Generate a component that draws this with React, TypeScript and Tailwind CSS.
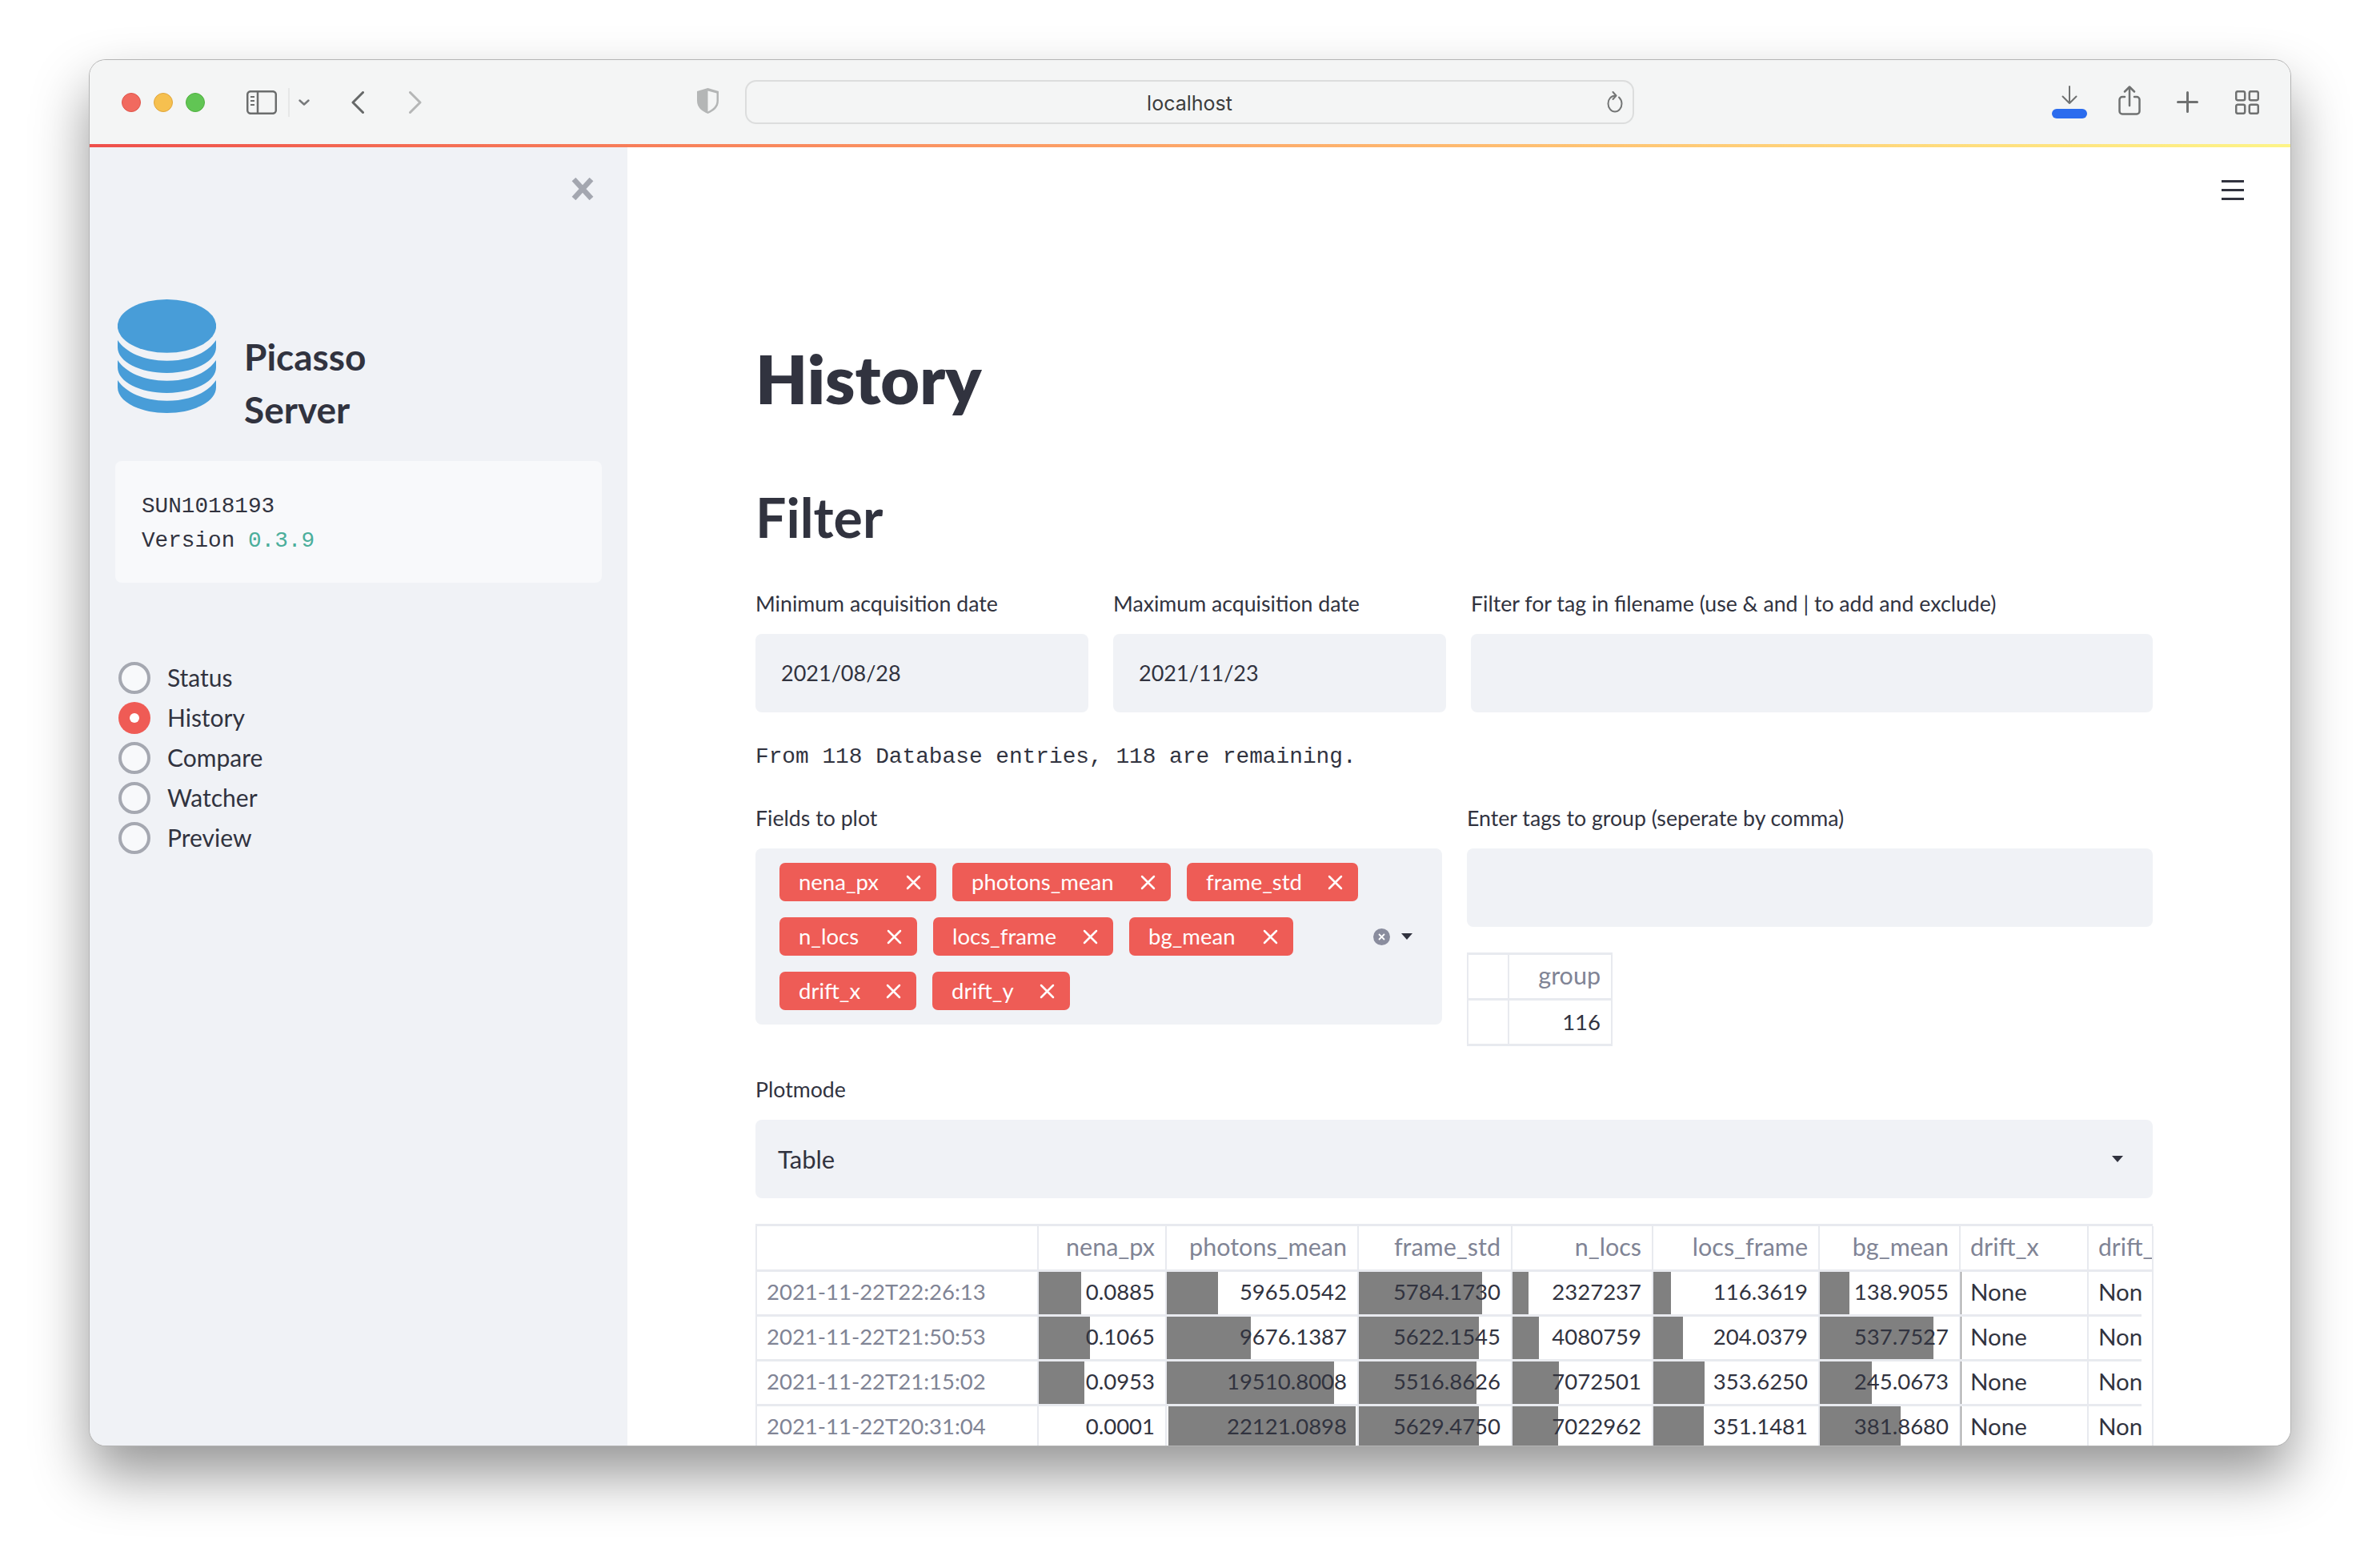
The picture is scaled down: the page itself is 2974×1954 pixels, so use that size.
import React from "react";

const sans = "[font-family:Lato,'Noto_Sans',sans-serif]";

function Toolbar() {
  return (
    <div className="flex h-[105px] shrink-0 items-center bg-[#f4f5f5] pl-[40px] text-[#6b6d6d]">
      <div className="flex gap-[16px]">
        <div className="h-[24px] w-[24px] rounded-full border border-[#e0564c] bg-[#f16a5f]" />
        <div className="h-[24px] w-[24px] rounded-full border border-[#e0a63c] bg-[#f6c04f]" />
        <div className="h-[24px] w-[24px] rounded-full border border-[#4fb03f] bg-[#61c554]" />
      </div>
      <svg className="ml-[52px]" width="38" height="30" viewBox="0 0 38 30" fill="none" stroke="#6b6d6d" strokeWidth="2.5">
        <rect x="1.2" y="1.2" width="35.6" height="27.6" rx="4" />
        <path d="M14 1v28" />
        <path d="M5 8h5M5 13h5M5 18h5" strokeWidth="2" />
      </svg>
      <div className="ml-[14px] h-[36px] w-[2px] bg-[#e6e7e7]" />
      <svg className="ml-[11px]" width="14" height="8" viewBox="0 0 14 8" fill="none" stroke="#77797b" strokeWidth="2.4" strokeLinecap="round" strokeLinejoin="round">
        <path d="M1.5 1.5 7 6.500l5.500-5" />
      </svg>
      <svg className="ml-[52px]" width="16" height="28" viewBox="0 0 16 28" fill="none" stroke="#666868" strokeWidth="3" strokeLinecap="round" strokeLinejoin="round">
        <path d="M14.500 1.500 2 14l12.500 12.500" />
      </svg>
      <svg className="ml-[56px]" width="16" height="28" viewBox="0 0 16 28" fill="none" stroke="#b5b6b6" strokeWidth="3" strokeLinecap="round" strokeLinejoin="round">
        <path d="M1.500 1.500 14 14 1.500 26.500" />
      </svg>
      <svg className="ml-[343px] mt-[-3px]" width="29" height="34" viewBox="0 0 29 34">
        <path d="M14.500 1 28 5v12c0 8-6 13-13.500 16C7 30 1 25 1 17V5Z" fill="#b4b6b6" />
        <path d="M14.500 4.500 25.500 7.500V17c0 6.500-5 10.500-11 13.500Z" fill="#f4f5f5" />
      </svg>
      <div className="relative ml-[32px] flex h-[55px] w-[1111px] items-center justify-center rounded-[14px] border-2 border-[#dcdddd] pt-[5px] text-[25px] text-[#3c3d3d] [font-family:Inter,sans-serif]">
        localhost
        <svg className="absolute right-[12px] top-[12px]" width="20" height="27" viewBox="0 0 20 27" fill="none" stroke="#747676" strokeWidth="2" strokeLinecap="round" strokeLinejoin="round">
          <path d="M11 5.500C5 5.500 1.500 10 1.500 15.500S5.500 25.500 10 25.500 18.500 21 18.500 15.500c0-3.500-1.500-6-3.500-8" />
          <path d="M7.500 1 11.500 5.500 7.500 10" />
        </svg>
      </div>
      <div className="ml-[522px] flex w-[44px] flex-col items-center">
        <svg width="20" height="24" viewBox="0 0 20 24" fill="none" stroke="#6f7171" strokeWidth="2" strokeLinecap="round" strokeLinejoin="round">
          <path d="M10 1v21M1.500 13.500 10 22l8.500-8.500" />
        </svg>
        <div className="mt-[5px] h-[12px] w-[44px] rounded-full bg-[#2b6cee]" />
      </div>
      <svg className="ml-[39px] mt-[-4px]" width="28" height="37" viewBox="0 0 28 37" fill="none" stroke="#6f7171" strokeWidth="2.500" strokeLinecap="round" strokeLinejoin="round">
        <path d="M8 14H5a3.500 3.500 0 0 0-3.500 3.500V32A3.500 3.500 0 0 0 5 35.500h18a3.500 3.500 0 0 0 3.500-3.500V17.500A3.500 3.500 0 0 0 23 14h-3" />
        <path d="M14 25V2M8 7.500 14 1.500l6 6" />
      </svg>
      <svg className="ml-[45px]" width="27" height="27" viewBox="0 0 27 27" fill="none" stroke="#6f7171" strokeWidth="3" strokeLinecap="round">
        <path d="M13.500 1.500v24M1.500 13.500h24" />
      </svg>
      <svg className="ml-[46px]" width="30" height="30" viewBox="0 0 30 30" fill="none" stroke="#6f7171" strokeWidth="2.500">
        <rect x="1.200" y="1.200" width="11" height="11" rx="2" />
        <rect x="17.800" y="1.200" width="11" height="11" rx="2" />
        <rect x="1.200" y="17.800" width="11" height="11" rx="2" />
        <rect x="17.800" y="17.800" width="11" height="11" rx="2" />
      </svg>
    </div>
  );
}

function Logo() {
  const band = "M0 51C10 66 32 76.700 61.500 76.700 91 76.700 113 66 123 51L123 60C123 78 95 92 61.500 92 28 92 0 78 0 60Z";
  return (
    <svg width="123" height="142" viewBox="0 0 123 142" fill="#489dd8">
      <ellipse cx="61.500" cy="33.400" rx="61.700" ry="33.400" />
      <path d={band} />
      <path d={band} transform="translate(0 25)" />
      <path d={band} transform="translate(0 50)" />
    </svg>
  );
}

function Sidebar() {
  const items = ["Status", "History", "Compare", "Watcher", "Preview"];
  return (
    <div className="flex w-[672px] shrink-0 flex-col bg-[#f0f2f6] px-[32px] pt-[38px]">
      <div className="flex justify-end pr-[10px]">
        <svg width="28" height="28" viewBox="0 0 28 28" stroke="#a4a7b0" strokeWidth="6.500">
          <path d="M3 2 25 26M25 2 3 26" />
        </svg>
      </div>
      <div className="ml-[3px] mt-[124px] flex items-start">
        <Logo />
        <div className="ml-[35px] mt-[39px] text-[46px] font-bold leading-[66px] text-[#31333f]">
          <div>Picasso</div>
          <div>Server</div>
        </div>
      </div>
      <div className="mt-[31px] flex h-[152px] w-[608px] flex-col justify-center rounded-[8px] bg-[#f8f9fb] pl-[33px] pt-[3px] text-[27.700px] leading-[43px] text-[#31333f] [font-family:'Liberation_Mono',monospace]">
        <div>SUN1018193</div>
        <div>
          Version <span className="text-[#4bae9b]">0.3.9</span>
        </div>
      </div>
      <div className="mt-[94px] flex flex-col">
        {items.map((t) => (
          <div key={t} className="ml-[4px] flex h-[50px] items-center text-[30px] text-[#31333f]">
            {t === "History" ? (
              <div className="flex h-[40px] w-[40px] items-center justify-center rounded-full bg-[#ef5b55]">
                <div className="h-[12px] w-[12px] rounded-full bg-white" />
              </div>
            ) : (
              <div className="h-[40px] w-[40px] rounded-full border-[4px] border-[#a5a8b1] bg-[#f8f9fb]" />
            )}
            <span className="ml-[21px] mt-[-1px]">{t}</span>
          </div>
        ))}
      </div>
    </div>
  );
}

function Label({ children }: { children: React.ReactNode }) {
  return <div className="h-[36px] text-[26.700px] leading-[36px] text-[#31333f]">{children}</div>;
}

function Field({ label, value }: { label: string; value?: string }) {
  return (
    <div>
      <Label>{label}</Label>
      <div className="mt-[20px] flex h-[98px] items-center rounded-[8px] bg-[#f0f2f6] pl-[32px] text-[27px] text-[#31333f]">{value}</div>
    </div>
  );
}

function Tag({ text, w }: { text: string; w: string }) {
  return (
    <div className={`flex h-[48px] items-center justify-between rounded-[7px] bg-[#ee5c56] pl-[24px] pr-[19px] text-[27.500px] text-white ${w}`}>
      <span>{text}</span>
      <svg width="19" height="19" viewBox="0 0 19 19" stroke="white" strokeWidth="2.500" strokeLinecap="round">
        <path d="M2 2 17 17M17 2 2 17" />
      </svg>
    </div>
  );
}

function Caret() {
  return (
    <svg width="14" height="8" viewBox="0 0 14 8" fill="#31333f">
      <path d="M0 0h14L7 8Z" />
    </svg>
  );
}

const cellBase = "relative overflow-hidden border-r-[2px] border-b-[3px] border-[#e8eaef]";

function Bar({ x = 0, w }: { x?: number; w: number }) {
  return <div className="absolute inset-y-0 bg-[#808080]" style={{ left: x, width: w }} />;
}

const headers = ["", "nena_px", "photons_mean", "frame_std", "n_locs", "locs_frame", "bg_mean"];

const rows: { idx: string; vals: [string, number, number?][] }[] = [
  {
    idx: "2021-11-22T22:26:13",
    vals: [["0.0885", 53], ["5965.0542", 64], ["5784.1730", 154], ["2327237", 20], ["116.3619", 22], ["138.9055", 37]],
  },
  {
    idx: "2021-11-22T21:50:53",
    vals: [["0.1065", 64], ["9676.1387", 105], ["5622.1545", 150], ["4080759", 33], ["204.0379", 37], ["537.7527", 142]],
  },
  {
    idx: "2021-11-22T21:15:02",
    vals: [["0.0953", 57], ["19510.8008", 209], ["5516.8626", 147], ["7072501", 58], ["353.6250", 64], ["245.0673", 65]],
  },
  {
    idx: "2021-11-22T20:31:04",
    vals: [["0.0001", 0], ["22121.0898", 234, 2], ["5629.4750", 150], ["7022962", 57], ["351.1481", 63], ["381.8680", 101]],
  },
];

function DataTable() {
  return (
    <div className="mt-[32px] grid grid-cols-[352px_160px_240px_192px_176px_208px_176px_160px_81px] grid-rows-[57px_56px_56px_56px_56px] border-l-[2px] border-t-[3px] border-[#e8eaef] text-[27.500px] leading-[50px]">
      {headers.map((h, i) => (
        <div key={i} className={`${cellBase} pr-[13px] text-right text-[30.500px] text-[#808495]`}>{h}</div>
      ))}
      <div className={`${cellBase} pl-[12px] text-[30.500px] text-[#808495]`}>drift_x</div>
      <div className={`${cellBase} whitespace-nowrap pl-[12px] text-[30px] text-[#808495]`}>drift_</div>
      {rows.map((r) => (
        <React.Fragment key={r.idx}>
          <div className={`${cellBase} pl-[12px] text-[#808495]`}>{r.idx}</div>
          {r.vals.map(([v, w, x], i) => (
            <div key={i} className={`${cellBase} pr-[13px] text-right text-[#31333f]`}>
              {w > 0 && <Bar w={w} x={x ?? 0} />}
              <span className="relative">{v}</span>
            </div>
          ))}
          <div className={`${cellBase} pl-[12px] text-[29.500px] text-[#31333f]`}>
            <Bar w={1} />
            None
          </div>
          <div className="border-r-[2px] border-[#e8eaef]">
            <div className="h-full w-[66px] border-b-[3px] border-[#e8eaef] pl-[12px] text-[29.500px] text-[#31333f]">Non</div>
          </div>
        </React.Fragment>
      ))}
    </div>
  );
}

function Main() {
  return (
    <div className="relative min-w-0 flex-1 overflow-hidden bg-white pl-[160px] pr-[172px] pt-[236px] text-[#31333f]">
      <svg className="absolute right-[58px] top-[41px]" width="28" height="25" viewBox="0 0 28 25" fill="#31333f">
        <rect width="28" height="3" />
        <rect y="11" width="28" height="3" />
        <rect y="22" width="28" height="3" />
      </svg>
      <h1 className="text-[84px] font-extrabold leading-[106px]">History</h1>
      <h2 className="mt-[80px] text-[68px] font-bold leading-[80px]">Filter</h2>
      <div className="mt-[50px] grid grid-cols-[416px_416px_1fr] gap-x-[31px]">
        <Field label="Minimum acquisition date" value="2021/08/28" />
        <Field label="Maximum acquisition date" value="2021/11/23" />
        <Field label="Filter for tag in filename (use & and | to add and exclude)" />
      </div>
      <div className="mt-[38px] h-[36px] text-[27.800px] leading-[36px] [font-family:'Liberation_Mono',monospace]">
        From 118 Database entries, 118 are remaining.
      </div>
      <div className="mt-[40px] grid grid-cols-[858px_1fr] gap-x-[31px]">
        <div>
          <Label>Fields to plot</Label>
          <div className="mt-[20px] flex h-[220px] items-center rounded-[8px] bg-[#f0f2f6] pl-[30px] pr-[37px]">
            <div className="flex w-[740px] flex-wrap gap-[20px]">
              <Tag text="nena_px" w="w-[196px]" />
              <Tag text="photons_mean" w="w-[273px]" />
              <Tag text="frame_std" w="w-[214px]" />
              <Tag text="n_locs" w="w-[172px]" />
              <Tag text="locs_frame" w="w-[225px]" />
              <Tag text="bg_mean" w="w-[205px]" />
              <Tag text="drift_x" w="w-[171px]" />
              <Tag text="drift_y" w="w-[172px]" />
            </div>
            <div className="ml-auto flex items-center gap-[14px]">
              <div className="flex h-[21px] w-[21px] items-center justify-center rounded-full bg-[#8a8d9e]">
                <svg width="9" height="9" viewBox="0 0 9 9" stroke="white" strokeWidth="1.800">
                  <path d="M1 1 8 8M8 1 1 8" />
                </svg>
              </div>
              <Caret />
            </div>
          </div>
        </div>
        <div>
          <Label>Enter tags to group (seperate by comma)</Label>
          <div className="mt-[20px] h-[98px] rounded-[8px] bg-[#f0f2f6]" />
          <div className="mt-[32px] grid w-[182px] grid-cols-[51px_1fr] grid-rows-[57px_57px] border-l-[2px] border-t-[3px] border-[#e8eaef] text-[27.500px] leading-[50px]">
            <div className={cellBase} />
            <div className={`${cellBase} pr-[13px] text-right text-[30.500px] text-[#808495]`}>group</div>
            <div className={cellBase} />
            <div className={`${cellBase} pr-[13px] pt-[2px] text-right`}>116</div>
          </div>
        </div>
      </div>
      <div className="mt-[36px]">
        <Label>Plotmode</Label>
        <div className="mt-[20px] flex h-[98px] items-center justify-between rounded-[8px] bg-[#f0f2f6] pl-[28px] pr-[37px] text-[31px]">
          <span>Table</span>
          <Caret />
        </div>
      </div>
      <DataTable />
    </div>
  );
}

export default function App() {
  return (
    <div className={`h-[1954px] w-full overflow-hidden bg-white pl-[112px] pt-[75px] ${sans}`}>
      <div className="flex h-[1731px] w-[2750px] flex-col overflow-hidden rounded-[20px] shadow-[0_0_0_1px_#b4b4b4,0_36px_70px_rgba(0,0,0,0.42)]">
        <Toolbar />
        <div className="h-[4px] shrink-0 bg-gradient-to-r from-[#ef4f4b] to-[#fdf487]" />
        <div className="flex min-h-0 flex-1">
          <Sidebar />
          <Main />
        </div>
      </div>
    </div>
  );
}
